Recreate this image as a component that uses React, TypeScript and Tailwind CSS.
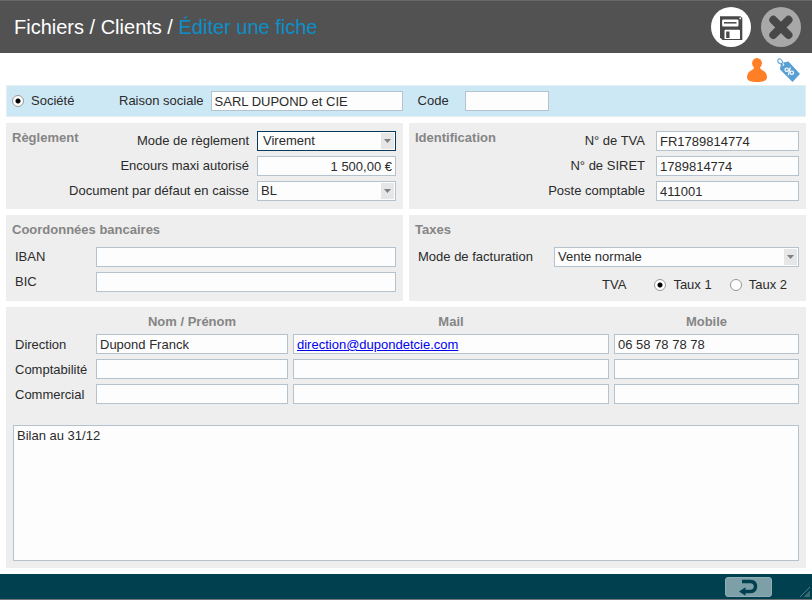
import { useState, type InputHTMLAttributes, type ReactNode, type SelectHTMLAttributes } from 'react';
import clsx from 'clsx';

const CONTACTS = [
  { id: 'direction', label: 'Direction', name: 'Dupond Franck', mail: 'direction@dupondetcie.com', mobile: '06 58 78 78 78' },
  { id: 'compta', label: 'Comptabilité', name: '', mail: '', mobile: '' },
  { id: 'commercial', label: 'Commercial', name: '', mail: '', mobile: '' },
];

const TextField = ({ className, ...props }: InputHTMLAttributes<HTMLInputElement>) => (
  <input
    type="text"
    className={clsx('h-5 border border-[#b4c3ce] bg-[#fdfdfd] px-[3px] outline-none focus:border-[#0a3a5a]', className)}
    {...props}
  />
);

interface SelectFieldProps extends SelectHTMLAttributes<HTMLSelectElement> {
  options: string[];
  active?: boolean;
  width: string;
}

const SelectField = ({ options, active, width, ...props }: SelectFieldProps) => (
  <div className={clsx('relative h-5', width)}>
    <select
      className={clsx(
        'block h-5 w-full appearance-none border bg-[#fdfdfd] pr-5 outline-none',
        active ? 'border-[#0a3a5a] pl-[5px]' : 'border-[#b4c3ce] pl-[3px]'
      )}
      {...props}
    >
      {options.map((option) => (
        <option key={option}>{option}</option>
      ))}
    </select>
    <span className="pointer-events-none absolute top-0.5 right-0.5 flex h-4 w-[13px] items-center justify-center bg-[#e6e6e6]">
      <svg width="7" height="4" viewBox="0 0 7 4" fill="#808080">
        <path d="M0 0h7L3.5 4z" />
      </svg>
    </span>
  </div>
);

interface RadioProps {
  name: string;
  label: string;
  checked: boolean;
  onChange: () => void;
}

const Radio = ({ name, label, checked, onChange }: RadioProps) => (
  <label className="flex items-center gap-[7px]">
    <input
      type="radio"
      name={name}
      checked={checked}
      onChange={onChange}
      className="h-3 w-3 appearance-none rounded-full border border-[#979797] bg-white checked:bg-[radial-gradient(circle,#000_2px,#fff_3px)]"
    />
    {label}
  </label>
);

const Panel = ({ title, className, children }: { title: string; className?: string; children: ReactNode }) => (
  <section className={clsx('bg-[#eeeeee] pt-[7px] pr-[7px] pl-1.5', className)}>
    <h2 className="font-bold text-[#858585]">{title}</h2>
    {children}
  </section>
);

const SaveIcon = () => (
  <svg width="40" height="40" viewBox="0 0 40 40">
    <path d="M9 9.300h20.500l1.800 1.800V33H11.500L9 30.500z" fill="#484848" />
    <path d="M12.300 12.500h14q1.200 0 1.200 1.200v4.600q0 1.200-1.200 1.200h-14q-1.200 0-1.200-1.200v-4.600q0-1.200 1.200-1.200z" fill="#fff" />
    <path d="M13 15.800h12.500" stroke="#484848" strokeWidth="1.500" />
    <path d="M14.500 22.800h13.500q1 0 1 1V32H13.500v-8.200q0-1 1-1z" fill="#fff" />
    <path d="M15.200 24.500h3.300V31h-3.300z" fill="#484848" />
    <path d="M28.500 10.500h1.500v1.800h-1.500z" fill="#fff" />
  </svg>
);

const CloseIcon = () => (
  <svg width="40" height="40" viewBox="0 0 40 40" stroke="#484848" strokeWidth="8" strokeLinecap="round">
    <path d="M12.300 12.800l15.200 15.200M27.500 12.800L12.300 28" />
  </svg>
);

const PersonIcon = () => (
  <svg width="20" height="24" viewBox="0 0 20 24" fill="#ff7f27">
    <ellipse cx="10" cy="5.200" rx="4.900" ry="5.200" />
    <path d="M7 8.500h6c0 2.300.8 2.900 2.500 3.700 3 1.400 4.500 3.800 4.500 7.300 0 3-3.500 4.500-10 4.500S0 22.500 0 19.500c0-3.500 1.500-5.900 4.500-7.300C6.200 11.400 7 10.800 7 8.500z" />
  </svg>
);

const TagIcon = () => (
  <svg width="24" height="24" viewBox="0 0 24 24">
    <path d="M4 5l7.500-1.500L23 16l-7.500 8L3 11.500z" fill="#5a9fd4" />
    <circle cx="6" cy="6.500" r="1.200" fill="#fff" />
    <path d="M6 7L1.200 4.500Q0 1 2.500.8 5 1 6 5.500" fill="none" stroke="#5a9fd4" strokeWidth="1.100" />
    <g fill="none" stroke="#fff" strokeWidth="1.200">
      <path d="M13.300 9.300l-2.100 8" />
      <circle cx="9.700" cy="11.700" r="1.700" />
      <circle cx="14.800" cy="14.700" r="1.700" />
    </g>
  </svg>
);

export default function App() {
  const [rate, setRate] = useState(1);
  const [company, setCompany] = useState(true);

  return (
    <div className="flex min-h-screen flex-col bg-white font-['Liberation_Sans',Arial,sans-serif] text-[13px] leading-4 text-[#2b2b2b]">
      <header className="flex h-[53px] items-center justify-between border-t border-[#686868] bg-[#525252] pr-[11px] pl-3.5">
        <h1 className="text-[20px] leading-6 text-white">
          Fichiers / Clients / <span className="text-[#0b8fcb]">Éditer une fiche</span>
        </h1>
        <div className="flex gap-2.5">
          <button type="button" aria-label="Enregistrer" className="h-10 w-10 rounded-full bg-white">
            <SaveIcon />
          </button>
          <button type="button" aria-label="Fermer" className="h-10 w-10 rounded-full bg-[#a8a8a8]">
            <CloseIcon />
          </button>
        </div>
      </header>

      <main className="flex flex-1 flex-col pb-1.5 px-1.5">
        <nav className="flex h-8 items-end justify-end gap-2.5 pr-[5px] pb-[3px]">
          <button type="button" aria-label="Contact" className="h-6">
            <PersonIcon />
          </button>
          <button type="button" aria-label="Remises" className="h-6">
            <TagIcon />
          </button>
        </nav>

        <section className="mb-1.5 flex h-8 items-center border border-[#e4eef3] bg-[#cde8f5] pl-[5px]">
          <div className="w-[107px]">
            <Radio name="type" label="Société" checked={company} onChange={() => setCompany(true)} />
          </div>
          <label htmlFor="raison" className="pr-[7px]">Raison sociale</label>
          <TextField id="raison" defaultValue="SARL DUPOND et CIE" className="w-48" />
          <label htmlFor="code" className="w-[62px] pl-[15px]">Code</label>
          <TextField id="code" className="w-[84px]" />
        </section>

        <div className="mb-1.5 grid grid-cols-2 gap-1.5">
          <Panel title="Règlement" className="flex justify-between pb-2">
            <div className="-ml-6 grid grid-cols-[auto_139px] items-center gap-x-2 gap-y-[5px] pt-px text-right whitespace-nowrap">
              <label htmlFor="mode">Mode de règlement</label>
              <SelectField id="mode" active width="w-full" options={['Virement', 'Chèque', 'Espèces']} />
              <label htmlFor="encours">Encours maxi autorisé</label>
              <TextField id="encours" defaultValue="1 500,00 €" className="w-full text-right" />
              <label htmlFor="document">Document par défaut en caisse</label>
              <SelectField id="document" width="w-full" options={['BL', 'Facture']} />
            </div>
          </Panel>

          <Panel title="Identification" className="flex justify-between pb-2">
            <div className="grid grid-cols-[auto_143px] items-center gap-x-[11px] gap-y-[5px] pt-px text-right whitespace-nowrap">
              <label htmlFor="tva">N° de TVA</label>
              <TextField id="tva" defaultValue="FR1789814774" className="w-full" />
              <label htmlFor="siret">N° de SIRET</label>
              <TextField id="siret" defaultValue="1789814774" className="w-full" />
              <label htmlFor="poste">Poste comptable</label>
              <TextField id="poste" defaultValue="411001" className="w-full" />
            </div>
          </Panel>

          <Panel title="Coordonnées bancaires" className="pb-[9px]">
            <div className="grid grid-cols-[78px_1fr] items-center gap-x-[3px] gap-y-[5px] pt-[9px] pl-[3px]">
              <label htmlFor="iban">IBAN</label>
              <TextField id="iban" className="w-full" />
              <label htmlFor="bic">BIC</label>
              <TextField id="bic" className="w-full" />
            </div>
          </Panel>

          <Panel title="Taxes" className="pb-[8px]">
            <div className="flex items-center justify-between pt-[9px] pl-[3px]">
              <label htmlFor="facturation">Mode de facturation</label>
              <SelectField id="facturation" width="w-[245px]" options={['Vente normale', 'Export']} />
            </div>
            <div role="radiogroup" aria-label="TVA" className="flex items-center justify-end pt-2.5 pr-3">
              <span className="pr-7">TVA</span>
              <div className="flex gap-[18px]">
                <Radio name="taux" label="Taux 1" checked={rate === 1} onChange={() => setRate(1)} />
                <Radio name="taux" label="Taux 2" checked={rate === 2} onChange={() => setRate(2)} />
              </div>
            </div>
          </Panel>
        </div>

        <section className="flex flex-1 flex-col bg-[#eeeeee] p-[7px]">
          <table className="w-full table-fixed text-left">
            <colgroup>
              <col className="w-[83px]" />
              <col className="w-[197px]" />
              <col />
              <col className="w-[185px]" />
            </colgroup>
            <thead>
              <tr className="h-5 text-center align-top text-[#858585]">
                <td />
                <th scope="col" className="pr-[5px]">Nom / Prénom</th>
                <th scope="col" className="pr-[5px]">Mail</th>
                <th scope="col">Mobile</th>
              </tr>
            </thead>
            <tbody>
              {CONTACTS.map((contact) => (
                <tr key={contact.id} className="h-[25px] align-top">
                  <th scope="row" className="pt-[3px] pl-0.5 font-normal">{contact.label}</th>
                  <td className="pr-[5px]">
                    <TextField aria-label={`${contact.label} nom`} defaultValue={contact.name} className="block w-full" />
                  </td>
                  <td className="pr-[5px]">
                    {contact.mail ? (
                      <div className="h-5 border border-[#b4c3ce] bg-[#fdfdfd] px-[3px] pt-0.5">
                        <a href={`mailto:${contact.mail}`} className="text-[#0000ee] underline">{contact.mail}</a>
                      </div>
                    ) : (
                      <TextField aria-label={`${contact.label} mail`} className="block w-full" />
                    )}
                  </td>
                  <td>
                    <TextField aria-label={`${contact.label} mobile`} defaultValue={contact.mobile} className="block w-full" />
                  </td>
                </tr>
              ))}
            </tbody>
          </table>
          <textarea
            aria-label="Observations"
            defaultValue="Bilan au 31/12"
            className="mt-4 min-h-[120px] w-full flex-1 resize-none border border-[#b4c3ce] bg-[#fdfdfd] px-[3px] pt-0.5 outline-none"
          />
        </section>
      </main>

      <footer className="flex h-[26px] items-start justify-end border-b border-[#6b7478] bg-[#00404f] pt-[3px]">
        <button
          type="button"
          aria-label="Valider"
          className="flex h-5 w-[47px] items-center justify-center rounded-[3px] border border-[#8fadb4] bg-[#7d9fa7]"
        >
          <svg width="19" height="17" viewBox="0 0 19 17">
            <path d="M3 2.500h8.500q5 .3 5 5t-5 5H5" fill="none" stroke="#00404f" strokeWidth="3.400" />
            <path d="M0 12.500l6.500-4.300v8.600z" fill="#00404f" />
          </svg>
        </button>
        <svg width="10" height="10" viewBox="0 0 10 10" className="mr-0.5 mb-0.5 ml-7 self-end">
          <path d="M0 10L10 0" fill="none" stroke="#4e7a85" />
          <path d="M3.500 10L10 3.500V10z" fill="#3a6873" />
        </svg>
      </footer>
    </div>
  );
}
